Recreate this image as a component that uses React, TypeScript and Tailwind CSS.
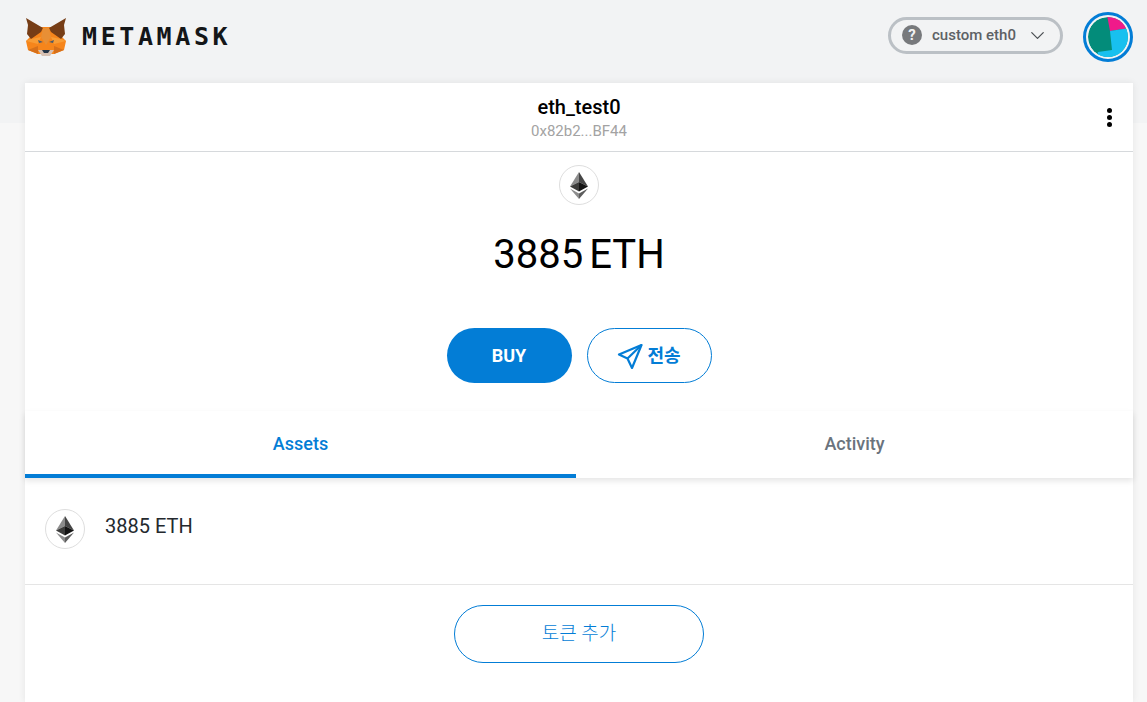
import { ChevronDown } from "lucide-react";

const roboto = "font-['Roboto','Noto_Sans_CJK_KR',sans-serif]";

function Fox() {
  return (
    <svg width="42" height="40" viewBox="0 0 42 40" className="shrink-0">
      <polygon points="5,20 14,10 28,10 37,20 41,24 39,33 29,37 13,37 3,33 1,24" fill="#f6851b" />
      <polygon points="1,1 18,11 16,15 6,22 2,17 3,8" fill="#763d16" />
      <polygon points="41,1 24,11 26,15 36,22 40,17 39,8" fill="#763d16" />
      <polygon points="18,11 24,11 26,20 21,28 16,20" fill="#e88f35" />
      <polygon points="6,22 16,20 13,27 1,24" fill="#f89c35" />
      <polygon points="36,22 26,20 29,27 41,24" fill="#f89c35" />
      <polygon points="3,33 13,29 13,37" fill="#d7701a" />
      <polygon points="39,33 29,29 29,37" fill="#d7701a" />
      <polygon points="13,33 29,33 25,39 17,39" fill="#d7c1b3" />
      <polygon points="17,33 25,33 23,36 19,36" fill="#233447" />
      <polygon points="13,23 18,25 14,26" fill="#4a5a6b" />
      <polygon points="29,23 24,25 28,26" fill="#4a5a6b" />
    </svg>
  );
}

function EthBadge() {
  return (
    <div className="flex h-10 w-10 shrink-0 items-center justify-center rounded-full border border-[#dedede] bg-white">
      <svg width="18" height="27" viewBox="0 0 18 27">
        <polygon points="9,0 0,14.5 9,10" fill="#8c8c8c" />
        <polygon points="9,0 18,14.5 9,10" fill="#454545" />
        <polygon points="0,14.5 9,10 9,19.5" fill="#3c3c3b" />
        <polygon points="18,14.5 9,10 9,19.5" fill="#141414" />
        <polygon points="0,16.5 9,21.5 9,27" fill="#8c8c8c" />
        <polygon points="18,16.5 9,21.5 9,27" fill="#5c5c5c" />
      </svg>
    </div>
  );
}

export default function App() {
  return (
    <div className={`${roboto} flex h-[702px] w-full flex-col overflow-hidden bg-[#f7f7f7]`}>
      <header className="flex h-[123px] shrink-0 items-start justify-between bg-[#f2f3f4] pl-[25px] pr-[14px] pt-[12px]">
        <div className="flex items-center gap-[15px] pt-[4px]">
          <Fox />
          <span className="pt-[1px] font-['DejaVu_Sans_Mono',monospace] text-[25px] leading-[40px] font-bold tracking-[3.6px] text-[#141618]">
            METAMASK
          </span>
        </div>
        <div className="flex items-center gap-[20px]">
          <div className="mt-[-4px] flex h-[37px] w-[175px] items-center rounded-full border-[3px] border-[#bbc0c5] pl-[11px] pr-[11px]">
            <span className="flex h-[20px] w-[20px] items-center justify-center rounded-full bg-[#77797c] text-[15px] font-bold text-[#f2f3f4]">
              ?
            </span>
            <span className="ml-[10px] flex-1 pt-[1px] text-[15px] font-medium text-[#5d6165]">custom eth0</span>
            <ChevronDown size={23} strokeWidth={1.3} className="text-[#4a4e52]" />
          </div>
          <div className="h-[50px] w-[50px] rounded-full border-[3px] border-[#037dd6] p-[2px]">
            <svg viewBox="0 0 40 40" className="h-full w-full rounded-full">
              <circle cx="20" cy="20" r="20" fill="#038c7a" />
              <polygon points="19,-2 42,-2 42,11 22,14" fill="#f01a8a" />
              <polygon points="22,14 42,11 42,42 8,42 10,35 24,33" fill="#18c0ef" />
            </svg>
          </div>
        </div>
      </header>

      <main className="mr-[14px] ml-[25px] -mt-[40px] flex flex-1 flex-col bg-white shadow-[0_0_7px_rgba(0,0,0,0.08)]">
        <div className="relative flex h-[69px] shrink-0 flex-col items-center border-b border-[#d6d9dc] pt-[13px]">
          <span className="text-[20px] leading-[23px] font-medium text-black">eth_test0</span>
          <span className="mt-[1px] text-[15px] leading-[22px] text-[#a3a3a3]">0x82b2...BF44</span>
          <div className="absolute right-[21px] top-[25px] flex flex-col gap-[2px]">
            <span className="h-[5px] w-[5px] rounded-full bg-black" />
            <span className="h-[5px] w-[5px] rounded-full bg-black" />
            <span className="h-[5px] w-[5px] rounded-full bg-black" />
          </div>
        </div>

        <div className="flex shrink-0 flex-col items-center pt-[13px]">
          <EthBadge />
          <div className="mt-[19px] flex text-[40px] leading-[62px] text-black">
            <span className="mr-[6px]">3885</span>
            <span>ETH</span>
          </div>
          <div className="mt-[42px] flex gap-[15px]">
            <button className="h-[55px] w-[125px] rounded-full bg-[#037dd6] text-[18px] font-bold text-white">
              BUY
            </button>
            <button className="flex h-[55px] w-[125px] items-center justify-center gap-[4px] rounded-full border border-[#037dd6] text-[18px] font-bold text-[#037dd6]">
              <svg width="26" height="26" viewBox="0 0 26 26" fill="none" stroke="#037dd6" strokeWidth="2.2" strokeLinejoin="round">
                <polygon points="24.5,2 2,11.5 10.5,15.5 15,25" />
                <line x1="24.5" y1="2" x2="10.5" y2="15.5" />
              </svg>
              전송
            </button>
          </div>
        </div>

        <div className="relative mt-[28px] flex h-[67px] shrink-0 shadow-[0_3px_6px_rgba(0,0,0,0.1)]">
          <div className="flex w-[551px] items-center justify-center border-b-[4px] border-[#037dd6] pt-[1px] text-[18px] font-medium text-[#037dd6]">
            Assets
          </div>
          <div className="flex flex-1 items-center justify-center pb-[3px] text-[18px] font-medium text-[#6a737d]">
            Activity
          </div>
        </div>

        <div className="flex h-[107px] shrink-0 items-start gap-[20px] border-b border-[#e5e5e5] pl-[20px] pt-[31px]">
          <EthBadge />
          <span className="text-[20px] leading-[35px] text-[#24292e]">3885 ETH</span>
        </div>

        <div className="flex justify-center pt-[20px]">
          <button className="h-[58px] w-[250px] rounded-full border border-[#037dd6] pt-[1px] text-[19px] font-light text-[#037dd6]">
            토큰 추가
          </button>
        </div>
      </main>
    </div>
  );
}
